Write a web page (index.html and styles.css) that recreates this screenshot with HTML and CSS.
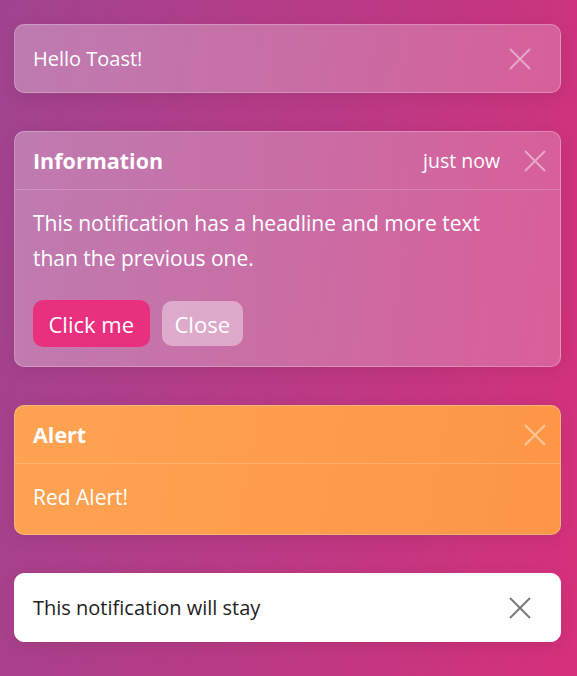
FILE: index.html
```html
<!DOCTYPE html>
<html>

<head>
    <title>Toasts</title>
    <link rel="stylesheet" href="styles.css">
</head>

<body>
    <div class="stack">
        <div class="toast glass">
            <div class="toast-row">
                <span class="message">Hello Toast!</span>
                <button class="close"><svg viewBox="0 0 24 24"><path d="M2 2 L22 22 M22 2 L2 22"/></svg></button>
            </div>
        </div>

        <div class="toast glass">
            <div class="toast-header">
                <strong class="title">Information</strong>
                <span class="time">just now</span>
                <button class="close"><svg viewBox="0 0 24 24"><path d="M2 2 L22 22 M22 2 L2 22"/></svg></button>
            </div>
            <div class="toast-body">
                <p>This notification has a headline and more text than the previous one.</p>
                <div class="actions">
                    <button class="btn primary">Click me</button>
                    <button class="btn secondary">Close</button>
                </div>
            </div>
        </div>

        <div class="toast alert">
            <div class="toast-header">
                <strong class="title">Alert</strong>
                <button class="close"><svg viewBox="0 0 24 24"><path d="M2 2 L22 22 M22 2 L2 22"/></svg></button>
            </div>
            <div class="toast-body">
                <p>Red Alert!</p>
            </div>
        </div>

        <div class="toast plain">
            <div class="toast-row">
                <span class="message">This notification will stay</span>
                <button class="close"><svg viewBox="0 0 24 24"><path d="M2 2 L22 22 M22 2 L2 22"/></svg></button>
            </div>
        </div>
    </div>
</body>

</html>
```

FILE: styles.css
```css
body {
    font-family: "Open Sans", "Noto Sans", sans-serif;
    background-image: linear-gradient(100deg, #a0448f 0%, #b93a85 50%, #d6307a 100%);
    margin: 0;
    height: 100vh;
    color: #fff;
}

button {
    border: 0;
    outline: none;
    background: none;
    font-family: inherit;
    cursor: pointer;
}

.stack {
    display: flex;
    flex-direction: column;
    gap: 38px;
    padding: 24px 16px 0 14px;
}

.toast {
    border-radius: 10px;
    border: 1px solid rgba(255, 255, 255, 0.25);
    box-shadow: 0 4px 16px rgba(0, 0, 0, 0.08);
}

.glass {
    background-image: linear-gradient(90deg, rgba(255, 255, 255, 0.3), rgba(255, 255, 255, 0.22));
}

.alert {
    background-image: linear-gradient(100deg, #fea352, #fd9646);
    border-color: rgba(255, 200, 150, 0.6);
}

.alert .toast-header {
    border-bottom-color: rgba(255, 200, 140, 0.5);
}

.plain {
    background-color: #fff;
    color: #1e1e1e;
    border-color: #fff;
}

.toast-row {
    display: flex;
    align-items: center;
    height: 67px;
    padding: 0 28px 0 18px;
}

.message {
    flex: 1;
    font-size: 20px;
}

.close {
    width: 24px;
    height: 24px;
    padding: 0;
    display: flex;
}

.close svg {
    width: 24px;
    height: 24px;
    fill: none;
    stroke: rgba(255, 255, 255, 0.45);
    stroke-width: 2;
}

.plain .close svg {
    stroke: #777;
}

.toast-header {
    display: flex;
    align-items: center;
    height: 57px;
    padding: 0 13px 0 18px;
    border-bottom: 1px solid rgba(255, 255, 255, 0.2);
}

.title {
    flex: 1;
    font-size: 21.5px;
    font-weight: 700;
}

.time {
    font-size: 19.5px;
    margin-right: 23px;
}

.toast-body {
    padding: 16px 18px 19px;
}

.toast-body p {
    margin: 0;
    max-width: 485px;
    font-size: 21px;
    line-height: 35px;
}

.actions {
    display: flex;
    gap: 12px;
    align-items: center;
    margin-top: 24px;
}

.btn {
    color: #fff;
    font-size: 22px;
    border-radius: 10px;
    padding: 0 15.5px;
}

.primary {
    background-color: #e8307f;
    height: 47px;
}

.secondary {
    background-color: rgba(255, 255, 255, 0.4);
    height: 45px;
    padding: 0 13px;
}
```
